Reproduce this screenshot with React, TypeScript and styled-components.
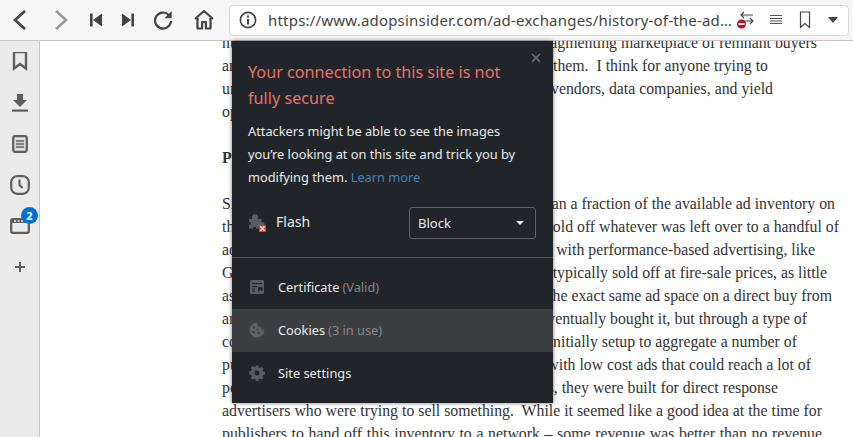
import styled, { createGlobalStyle } from "styled-components";

const GlobalStyle = createGlobalStyle`
  html, body { margin: 0; padding: 0; height: 100%; overflow: hidden; background: #fff; }
  #root { height: 100%; }
`;

const articleLines: { left: string; right?: string; w: number; bold?: boolean; gap?: boolean }[] = [
  { left: "nu", right: "merous intermediaries, and a rapidly fragmenting marketplace of remnant buyers", w: 595 },
  { left: "an", right: "d sellers looking for a way to reach them.  I think for anyone trying to", w: 546 },
  { left: "un", right: "derstand the role of networks, exchanges, vendors, data companies, and yield", w: 551 },
  { left: "optimizers", w: 66 },
  { left: "Publishers", w: 72, bold: true, gap: true },
  { left: "Si", right: "nce the dawn of online media, publishers sold less than a fraction of the available ad inventory on", w: 613, gap: true },
  { left: "th", right: "eir sites through direct sales, and most of them just sold off whatever was left over to a handful of", w: 617 },
  { left: "ad", right: " networks or filled the unsold space with performance-based advertising, like", w: 593 },
  { left: "G", right: "oogle AdSense. Remnant inventory was typically sold off at fire-sale prices, as little", w: 605 },
  { left: "as", right: " a tenth of what a buyer would pay for the exact same ad space on a direct buy from", w: 610 },
  { left: "an", right: " advertiser, and that buyer eventually bought it, but through a type of", w: 585 },
  { left: "co", right: "mpany called an ad network, initially setup to aggregate a number of", w: 575 },
  { left: "pu", right: "blishers and supply advertisers with low cost ads that could reach a lot of", w: 589 },
  { left: "pe", right: "ople. Of course, with low rates, they were built for direct response", w: 556 },
  { left: "advertisers who were trying to sell something.\u00a0 While it seemed like a good idea at the time for", w: 600 },
  { left: "publishers to hand off this inventory to a network – some revenue was better than no revenue", w: 600 },
];

export default function App() {
  return (
    <Window>
      <GlobalStyle />
      <Toolbar>
        <ToolButton $w={40}>
          <svg width="22" height="24" viewBox="0 0 22 24"><path d="M16 3 6 12l10 9" fill="none" stroke="#444" strokeWidth="2.6" /></svg>
        </ToolButton>
        <ToolButton $w={42}>
          <svg width="22" height="24" viewBox="0 0 22 24"><path d="m6 3 10 9-10 9" fill="none" stroke="#9a9a9a" strokeWidth="2.6" /></svg>
        </ToolButton>
        <ToolButton $w={28}>
          <svg width="14" height="16" viewBox="0 0 14 16"><path d="M1 1.500h2.600v13H1zM13 1.500v13L4 8z" fill="#444" /></svg>
        </ToolButton>
        <ToolButton $w={35}>
          <svg width="14" height="16" viewBox="0 0 14 16"><path d="M13 1.500h-2.600v13H13zM1 1.500v13L10 8z" fill="#444" /></svg>
        </ToolButton>
        <ToolButton $w={36}>
          <svg width="20" height="20" viewBox="0 0 20 20"><path d="M16 5.200A8 8 0 1 0 18 11" fill="none" stroke="#444" strokeWidth="2.200" /><path d="M18.600 1v7.200h-7.200z" fill="#444" /></svg>
        </ToolButton>
        <ToolButton $w={46}>
          <svg width="22" height="22" viewBox="0 0 22 22"><path d="M2 10 11 2l9 8M4.500 9v10.500h4.600V13h3.800v6.500h4.600V9" fill="none" stroke="#444" strokeWidth="2.200" strokeLinejoin="round" /></svg>
        </ToolButton>
        <AddressBar>
          <svg width="20" height="20" viewBox="0 0 20 20">
            <circle cx="10" cy="10" r="7.600" fill="none" stroke="#444" strokeWidth="1.600" />
            <rect x="9" y="9" width="2" height="5.500" fill="#444" />
            <rect x="9" y="5.600" width="2" height="2" fill="#444" />
          </svg>
          <Url>https://www.adopsinsider.com/ad-exchanges/history-of-the-ad…</Url>
          <AddressIcons>
            <AddressIcon $w={28}>
              <svg width="22" height="24" viewBox="0 0 22 24">
                <path d="M5 7h12M8 4 5 7l3 3M5 13h12M14 10l3 3-3 3" fill="none" stroke="#444" strokeWidth="1.100" />
                <circle cx="5.500" cy="16" r="4.500" fill="#c4121c" />
                <rect x="2.500" y="15" width="6" height="2" fill="#fff" />
              </svg>
            </AddressIcon>
            <AddressIcon $w={29}>
              <svg width="14" height="14" viewBox="0 0 14 14"><path d="M1 2.500h12M1 5.500h12M1 8h12M1 10.500h12" fill="none" stroke="#555" strokeWidth="1.200" /></svg>
            </AddressIcon>
            <AddressIcon $w={29}>
              <svg width="12" height="18" viewBox="0 0 12 18"><path d="M1.500 1h9v15.500L6 12.500l-4.500 4z" fill="none" stroke="#444" strokeWidth="1.200" /></svg>
            </AddressIcon>
            <AddressIcon $w={28}>
              <svg width="12" height="8" viewBox="0 0 12 8"><path d="M1 1h10L6 7z" fill="#444" /></svg>
            </AddressIcon>
          </AddressIcons>
        </AddressBar>
      </Toolbar>
      <Body>
        <Sidebar>
          <SideItem>
            <svg width="16" height="20" viewBox="0 1.500 16 20"><path d="M2 1.500h12v16.500L8 13.500 2 18z" fill="none" stroke="#5e5e5e" strokeWidth="2.400" /></svg>
          </SideItem>
          <SideItem>
            <svg width="18" height="20" viewBox="0 0 18 20"><path d="M6 1h6v6h4l-7 7-7-7h4z" fill="#5e5e5e" /><rect x="1" y="16.500" width="16" height="2.200" fill="#5e5e5e" /></svg>
          </SideItem>
          <SideItem>
            <svg width="16" height="18" viewBox="0 0 16 18">
              <rect x="1.200" y="1.200" width="13.600" height="15.600" rx="2" fill="#ddd" stroke="#5e5e5e" strokeWidth="2.200" />
              <path d="M4 6h8M4 9h8M4 12h8" stroke="#5e5e5e" strokeWidth="1.300" />
            </svg>
          </SideItem>
          <SideItem>
            <svg width="20" height="20" viewBox="0 0 20 20">
              <rect x="1.200" y="1.200" width="17.600" height="17.600" rx="6" fill="none" stroke="#5e5e5e" strokeWidth="2.200" />
              <path d="M9.500 4.500V10l3 3" fill="none" stroke="#5e5e5e" strokeWidth="2.200" />
            </svg>
          </SideItem>
          <SideItem>
            <svg width="20" height="16" viewBox="0 0 20 16">
              <rect x="1.200" y="1.200" width="17.600" height="13.600" rx="1.500" fill="none" stroke="#5e5e5e" strokeWidth="2.200" />
              <rect x="1" y="1" width="18" height="4" fill="#5e5e5e" />
              <path d="M4 3h2M7.500 3h2M11 3h2" stroke="#ebebeb" strokeWidth="1.300" />
            </svg>
            <Badge>2</Badge>
          </SideItem>
          <SideItem>
            <svg width="12" height="12" viewBox="0 0 12 12"><path d="M6 1v10M1 6h10" stroke="#5e5e5e" strokeWidth="2" /></svg>
          </SideItem>
        </Sidebar>
        <Content>
          <Article>
            {articleLines.map((line) => (
              <ArticleLine key={line.left} $w={line.w} $bold={line.bold} $gap={line.gap}>
                {line.right ? (
                  <>
                    <span>{line.left}</span>
                    <LineRest>{line.right}</LineRest>
                  </>
                ) : (
                  <LineFull>{line.left}</LineFull>
                )}
              </ArticleLine>
            ))}
          </Article>
        </Content>
      </Body>
      <Popup>
        <CloseButton>
          <svg width="10" height="10" viewBox="0 0 10 10"><path d="m1 1 8 8M9 1 1 9" stroke="#6d7073" strokeWidth="1.700" /></svg>
        </CloseButton>
        <PopupHead>
          <Title>Your connection to this site is not fully secure</Title>
          <Description>
            Attackers might be able to see the images you’re looking at on this site and trick you by modifying them.{" "}
            <LearnMore>Learn more</LearnMore>
          </Description>
        </PopupHead>
        <PermissionRow>
          <FlashLabel>
            <PluginIcon>
              <svg width="17" height="17" viewBox="0 0 17 17">
                <path d="M1 6h3.500c-1.500-3 .5-5 2.500-5s4 2 2.500 5h4v3.500c2.500-1 3.500 1 3 3l-3 1v2H8c.8-2.500-3.500-2.500-3 0H1v-3.500c2.500.500 2.500-3.500 0-3z" fill="#5a5c5f" />
              </svg>
              <BlockedMark>
                <svg width="5" height="5" viewBox="0 0 5 5"><path d="m.5.5 4 4M4.500.5l-4 4" stroke="#fff" strokeWidth="1.200" /></svg>
              </BlockedMark>
            </PluginIcon>
            Flash
          </FlashLabel>
          <SelectBox>
            Block
            <svg width="8" height="4" viewBox="0 0 8 4"><path d="M0 0h8L4 4z" fill="#e8e8e8" /></svg>
          </SelectBox>
        </PermissionRow>
        <Divider />
        <MenuList>
          <MenuRow>
            <MenuIcon>
              <svg width="14" height="14" viewBox="0 0 14 14">
                <rect width="14" height="14" rx="1.500" fill="#5a5c5f" />
                <path d="M2 3.500h10M2 6.500h5M2 9h3M2 11h3" stroke="#212529" strokeWidth="1.100" />
                <path d="M8 7h4.500v4.500L10.200 10 8 11.500z" fill="#212529" />
              </svg>
            </MenuIcon>
            Certificate <Muted>(Valid)</Muted>
          </MenuRow>
          <MenuRow $active>
            <MenuIcon>
              <svg width="16" height="16" viewBox="0 0 16 16">
                <path d="M8 .5a7.500 7.500 0 1 0 7.500 7.500c-2 .3-3.400-.8-3.500-2.500C10 5.600 8.200 3 8 .5z" fill="#5f6063" />
                <circle cx="5" cy="5.500" r="1.200" fill="#3d3e42" />
                <circle cx="4.500" cy="10" r="1.200" fill="#3d3e42" />
                <circle cx="9.500" cy="11" r="1.200" fill="#3d3e42" />
                <circle cx="8.500" cy="7.500" r=".9" fill="#3d3e42" />
              </svg>
            </MenuIcon>
            Cookies <Muted>(3 in use)</Muted>
          </MenuRow>
          <MenuRow>
            <MenuIcon>
              <svg width="16" height="16" viewBox="0 0 16 16">
                <path
                  d="M6.700 1h2.600l.3 2 1.300.6 1.700-1.100 1.900 1.900-1.100 1.700.6 1.300 2 .3v2.600l-2 .3-.6 1.300 1.100 1.700-1.900 1.900-1.700-1.100-1.300.6-.3 2H6.700l-.3-2-1.300-.6-1.700 1.100-1.900-1.900 1.100-1.700-.6-1.300-2-.3V6.700l2-.3.6-1.300-1.100-1.700 1.900-1.900 1.700 1.100 1.300-.6z"
                  fill="#5a5c5f"
                  transform="translate(.3 -.5) scale(.98)"
                />
                <circle cx="8" cy="8" r="2.500" fill="#212529" />
              </svg>
            </MenuIcon>
            Site settings
          </MenuRow>
        </MenuList>
      </Popup>
    </Window>
  );
}

const Window = styled.div`
  width: 853px;
  height: 437px;
  position: relative;
  overflow: hidden;
  display: flex;
  flex-direction: column;
  font-family: "Noto Sans", sans-serif;
`;

const Toolbar = styled.header`
  height: 40px;
  flex: none;
  display: flex;
  align-items: center;
  background: #f6f6f6;
  border-bottom: 1px solid #c6c6c6;
`;

const ToolButton = styled.div<{ $w: number }>`
  width: ${({ $w }) => $w}px;
  height: 40px;
  flex: none;
  display: flex;
  align-items: center;
  justify-content: center;
`;

const AddressBar = styled.div`
  width: 620px;
  height: 31px;
  margin-left: 2px;
  box-sizing: border-box;
  display: flex;
  align-items: center;
  padding: 0 1px 0 8px;
  background: #fff;
  border: 1px solid #d8d8d8;
  border-radius: 4px;
`;

const Url = styled.div`
  margin-left: 10px;
  flex: 1;
  font-size: 15px;
  letter-spacing: 0.2px;
  color: #444;
  white-space: nowrap;
  overflow: hidden;
`;

const AddressIcons = styled.div`
  display: flex;
  align-items: center;
`;

const AddressIcon = styled.div<{ $w: number }>`
  width: ${({ $w }) => $w}px;
  height: 29px;
  display: flex;
  align-items: center;
  justify-content: center;
`;

const Body = styled.div`
  flex: 1;
  display: flex;
  min-height: 0;
`;

const Sidebar = styled.nav`
  width: 39px;
  flex: none;
  display: flex;
  flex-direction: column;
  background: #ebebeb;
  border-right: 1px solid #c8c8c8;
`;

const SideItem = styled.div`
  height: 41px;
  position: relative;
  display: flex;
  align-items: center;
  justify-content: center;
`;

const Badge = styled.span`
  position: absolute;
  left: 21px;
  top: 2px;
  width: 17px;
  height: 17px;
  border-radius: 50%;
  background: #0070d9;
  color: #fff;
  font-size: 11px;
  font-weight: 700;
  line-height: 17px;
  text-align: center;
`;

const Content = styled.main`
  flex: 1;
  overflow: hidden;
  background: #fff;
`;

const Article = styled.article`
  margin: -10px 0 0 182px;
  font-family: "Liberation Serif", serif;
  font-size: 15.8px;
  line-height: 23px;
  color: #333;
`;

const ArticleLine = styled.div<{ $w: number; $bold?: boolean; $gap?: boolean }>`
  width: ${({ $w }) => $w}px;
  height: 23px;
  margin-top: ${({ $gap }) => ($gap ? "23px" : "0")};
  font-weight: ${({ $bold }) => ($bold ? 700 : 400)};
  display: flex;
  white-space: pre;
`;

const LineRest = styled.span`
  flex: 1;
  min-width: 0;
  display: flex;
  justify-content: flex-end;
  overflow: hidden;
`;

const LineFull = styled.span`
  flex: 1;
  white-space: normal;
  text-align: justify;
  text-align-last: justify;
`;

const Popup = styled.section`
  position: absolute;
  left: 232px;
  top: 41px;
  width: 321px;
  box-sizing: border-box;
  padding-bottom: 8px;
  background: #212529;
  color: #eaeaea;
  box-shadow: 0 0 4px rgba(0, 0, 0, 0.55);
`;

const CloseButton = styled.div`
  position: absolute;
  right: 12px;
  top: 12px;
  line-height: 0;
`;

const PopupHead = styled.div`
  padding: 18px 16px 0;
`;

const Title = styled.h2`
  margin: 0;
  padding-right: 30px;
  font-size: 16.2px;
  font-weight: 400;
  line-height: 26px;
  color: #e5736d;
`;

const Description = styled.p`
  margin: 9px 0 0;
  font-size: 12.8px;
  line-height: 23px;
`;

const LearnMore = styled.a`
  color: #3c87b8;
`;

const PermissionRow = styled.div`
  display: flex;
  align-items: center;
  justify-content: space-between;
  padding: 18px 17px 18px 16px;
`;

const FlashLabel = styled.div`
  display: flex;
  align-items: center;
  gap: 12px;
  font-size: 14px;
  margin-top: -3px;
`;

const PluginIcon = styled.span`
  position: relative;
  width: 16px;
  height: 17px;
  display: block;
  line-height: 0;
`;

const BlockedMark = styled.span`
  position: absolute;
  right: -2px;
  bottom: -2px;
  width: 7px;
  height: 7px;
  background: #d9433e;
  display: flex;
  align-items: center;
  justify-content: center;
`;

const SelectBox = styled.div`
  width: 127px;
  height: 32px;
  box-sizing: border-box;
  padding: 0 11px 0 8px;
  display: flex;
  align-items: center;
  justify-content: space-between;
  border: 1px solid #5f6366;
  border-radius: 3px;
  font-size: 13px;
`;

const Divider = styled.hr`
  margin: 0;
  border: 0;
  height: 1px;
  background: #55585b;
`;

const MenuList = styled.div`
  padding-top: 8px;
`;

const MenuRow = styled.div<{ $active?: boolean }>`
  height: 43px;
  box-sizing: border-box;
  padding: 0 0 2px 16px;
  display: flex;
  align-items: center;
  gap: 3px;
  font-size: 12.8px;
  background: ${({ $active }) => ($active ? "#3d3e42" : "transparent")};
`;

const MenuIcon = styled.span`
  width: 18px;
  margin-right: 9px;
  display: flex;
  justify-content: center;
  line-height: 0;
`;

const Muted = styled.span`
  color: #85878a;
`;
